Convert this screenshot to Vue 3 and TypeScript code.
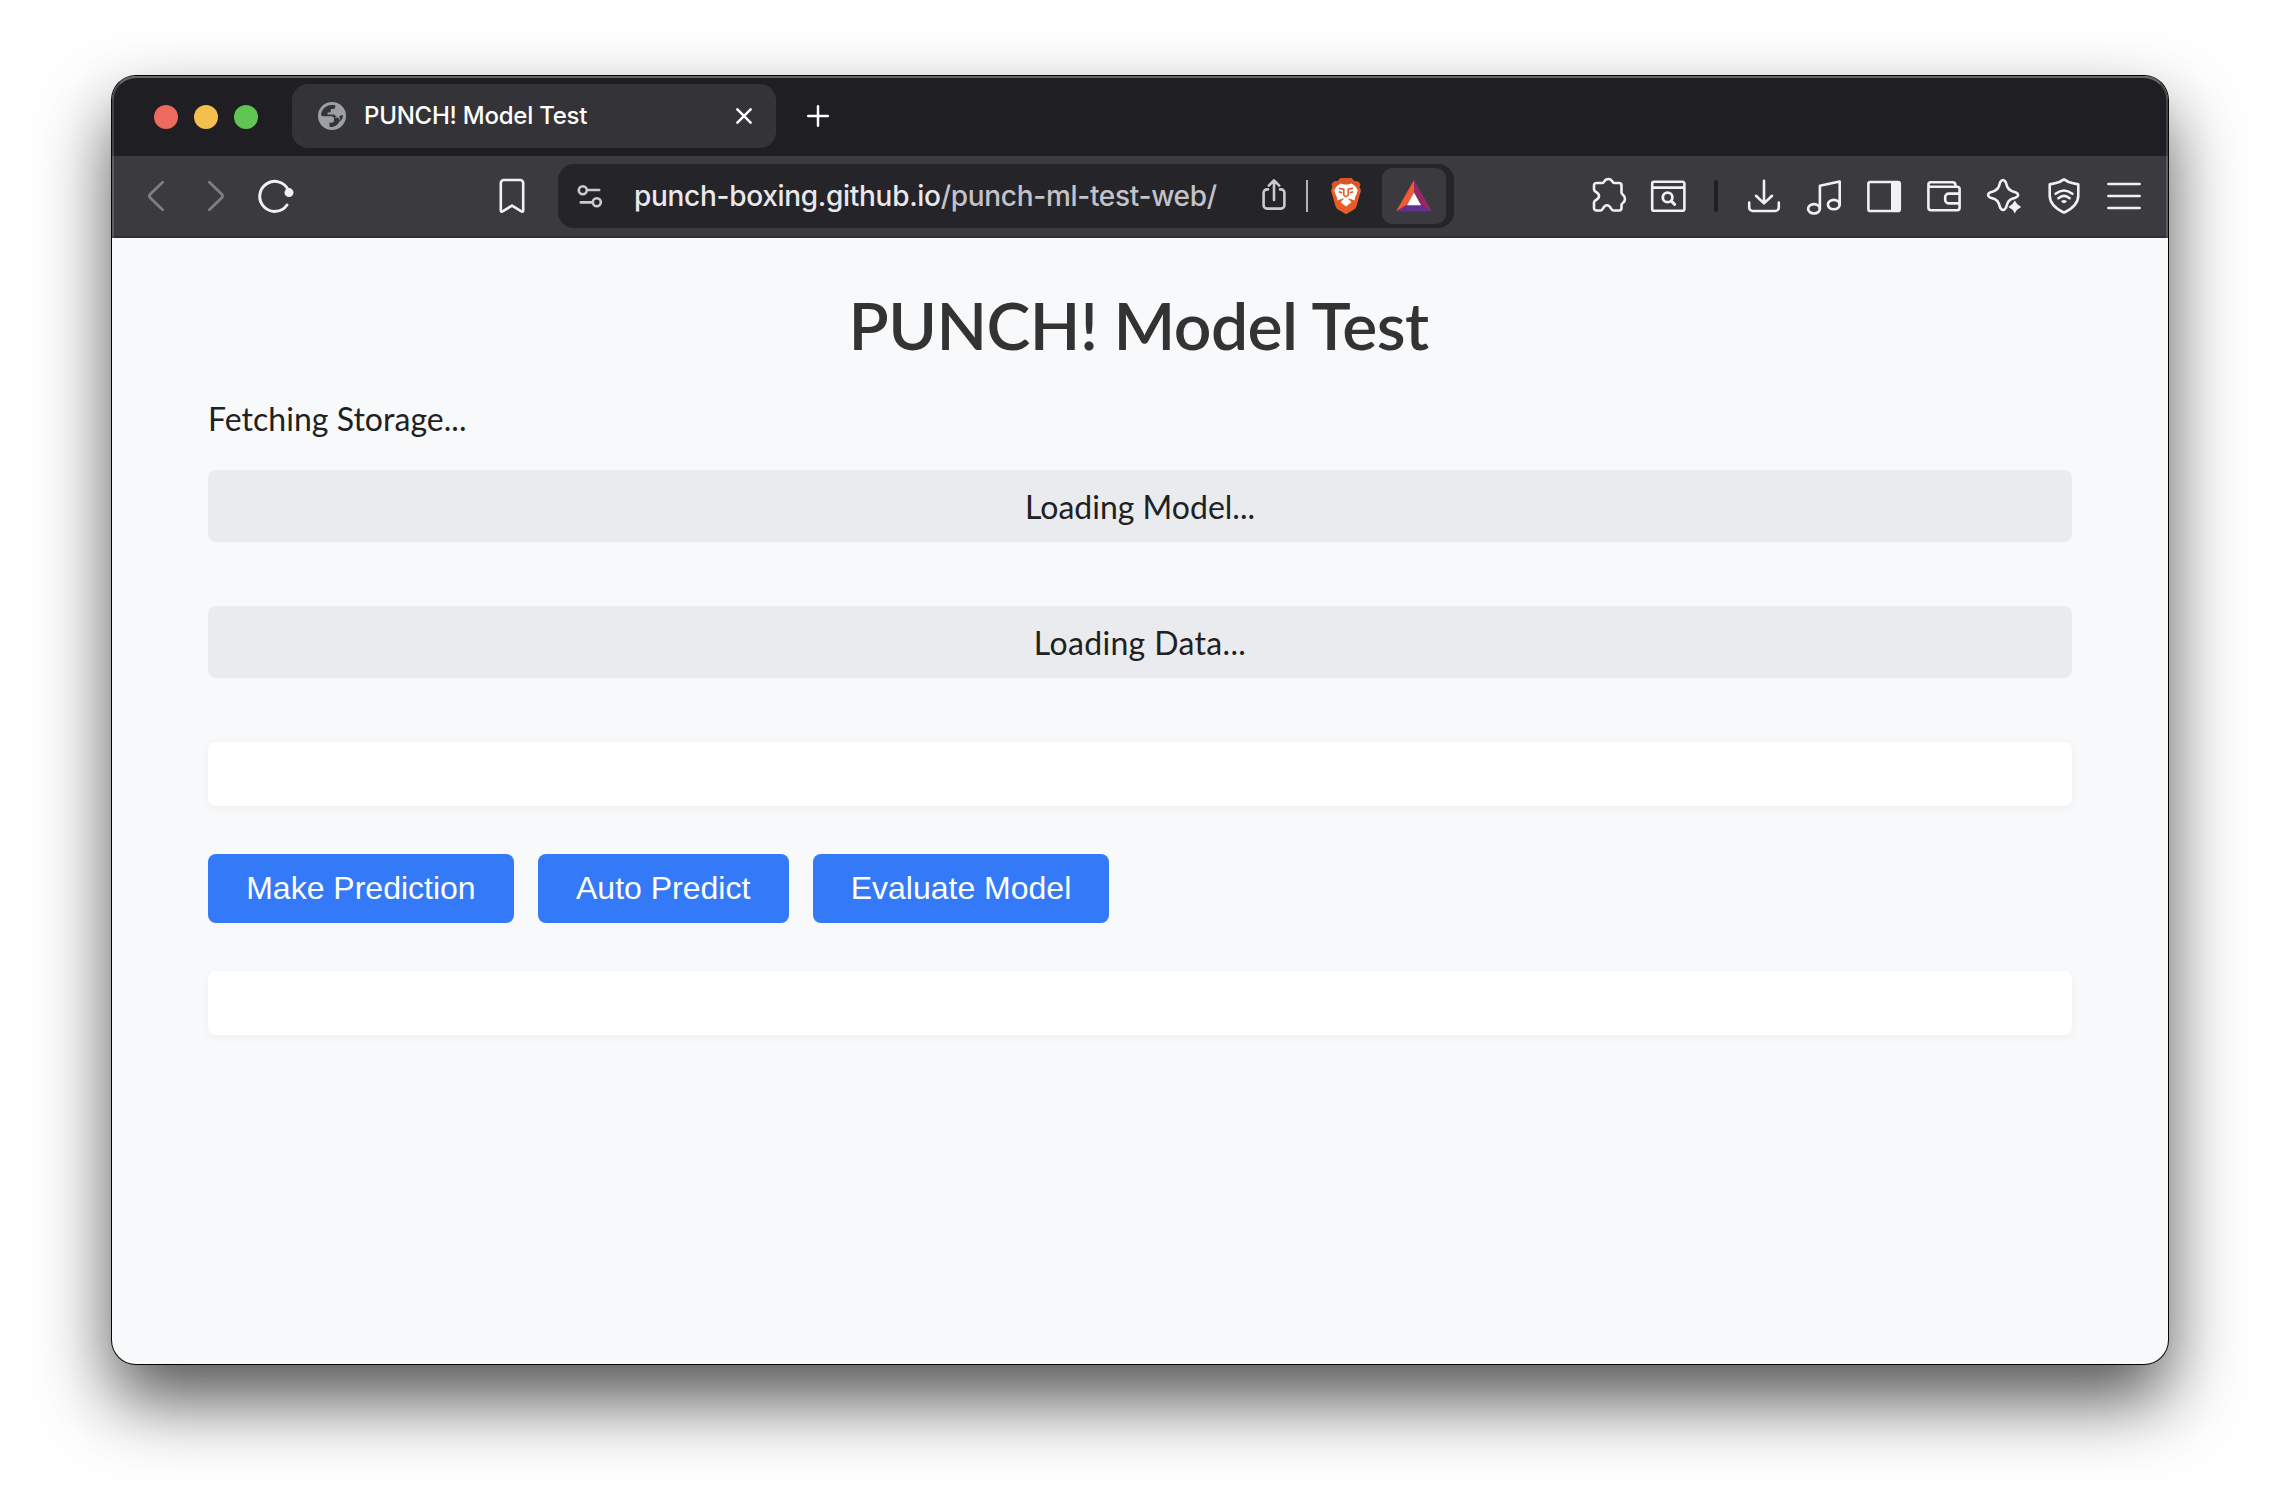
<script setup lang="ts">
interface Action {
  id: string
  label: string
}

const title = 'PUNCH! Model Test'
const status = 'Fetching Storage...'
const actions: Action[] = [
  { id: 'predict', label: 'Make Prediction' },
  { id: 'auto', label: 'Auto Predict' },
  { id: 'evaluate', label: 'Evaluate Model' },
]
</script>

<template>
  <div class="desktop">
    <div class="window">
      <header class="chrome">
        <div class="tabstrip">
          <div class="lights">
            <span class="light red"></span>
            <span class="light yellow"></span>
            <span class="light green"></span>
          </div>
          <div class="tab">
            <svg class="favicon" viewBox="0 0 28 28">
              <circle cx="14" cy="14" r="14" fill="#9aa0a6" />
              <path d="M3 13.2C3.3 8 7.6 3.4 13 3.1H17.2V5.2C17.2 6.4 16.3 7 15.2 7H12.8V9.2C12.8 10.1 12.2 10.6 11.3 10.6H9.6V12.4H15.4C16.6 12.4 17 13 17 14V16H19.6C21 16 21.4 17.2 22 18.4C20.6 21.8 17.6 24.6 14 24.9H11.2V21.4C9.6 21.4 8.6 20.4 8.6 18.8V17.6L3.2 13.4Z" fill="#343338" />
              <path d="M3 14.2H13.4A2.6 2.6 0 0 1 16 16.8V18.4A2.4 2.4 0 0 1 13.6 20.8H11.4V25.4C6 24.6 2.4 19.6 3 14.2Z" fill="#9aa0a6" />
              <path d="M17 13.4V15.2H20.8C22.4 15.2 22.4 17 22 19.4C24 17.8 25 15.6 25 13.2H22.8C21.9 15 19.6 15.4 18.4 14.4Z" fill="#343338" />
            </svg>
            <span class="tab-title">{{ title }}</span>
            <svg class="tab-close" viewBox="0 0 16 16"><path d="M1.4 1.4L14.6 14.6M14.6 1.4L1.4 14.6" /></svg>
          </div>
          <svg class="new-tab" viewBox="0 0 22 22"><path d="M11 1.2V20.8M1.2 11H20.8" /></svg>
        </div>

        <div class="toolbar">
          <div class="nav">
            <svg class="icon dim" viewBox="0 0 40 40"><path d="M26.6 6.2L14.2 18.2Q12.6 20 14.2 21.8L26.6 33.8" /></svg>
            <svg class="icon dim" viewBox="0 0 40 40"><path d="M13.4 6.2L25.8 18.2Q27.4 20 25.8 21.8L13.4 33.8" /></svg>
            <svg class="icon" viewBox="0 0 40 40">
              <path d="M31 29A15 15 0 1 1 32.2 13.8" stroke-width="3" />
              <circle cx="33" cy="16.6" r="4.5" class="solid" />
            </svg>
          </div>
          <svg class="icon bookmark" viewBox="0 0 40 40"><path d="M8.8 7A3 3 0 0 1 11.8 4H28.2A3 3 0 0 1 31.2 7V34.2Q31.2 36.6 29 35.2L20 29.6L11 35.2Q8.8 36.6 8.8 34.2Z" /></svg>

          <div class="omnibox">
            <svg class="icon soft tune" viewBox="0 0 40 40">
              <circle cx="12.8" cy="14.2" r="4" /><path d="M17.5 14H29.2M10.8 26.4H21.6" /><circle cx="26.8" cy="26.2" r="4" />
            </svg>
            <span class="url">punch-boxing.github.io<span class="path">/punch-ml-test-web/</span></span>
            <svg class="icon soft share" viewBox="0 0 40 40">
              <path d="M14 13.4H13A3.4 3.4 0 0 0 9.6 16.8V29.2A3.4 3.4 0 0 0 13 32.6H27A3.4 3.4 0 0 0 30.4 29.2V16.8A3.4 3.4 0 0 0 27 13.4H26M20 24V4.8M14.8 9.6L20 4.4L25.2 9.6" />
            </svg>
            <span class="sep"></span>
            <svg class="brave" viewBox="0 0 32 36">
              <path d="M10.6 0H21.4L24.4 3.2Q27.6 2.4 30.4 6L29.6 9L31 12.4L26.4 28.4Q25.8 30.2 24 31.4L17.2 35.6Q16 36.2 14.8 35.6L8 31.4Q6.2 30.2 5.6 28.4L1 12.4L2.4 9L1.6 6Q4.4 2.4 7.6 3.2Z" fill="#ea5c27" />
              <path d="M10.6 0H21.4L24.4 3.2Q27.6 2.4 30.4 6L29.6 8H2.4L1.6 6Q4.4 2.4 7.6 3.2Z" fill="#dd5425" />
              <path d="M10.4 5.4L13 6.2Q16 7 19 6.2L21.6 5.4L25 8L27.8 12.2L26.4 16.6L25 19.4L24.6 22.4L20 20.8L17.8 20.4L19.8 22.6L21.4 24.2L16 28.4L10.6 24.2L12.2 22.6L14.2 20.4L12 20.8L7.4 22.4L7 19.4L5.6 16.6L4.2 12.2L7 8Z" fill="#fff" />
              <path d="M9 10.4L13.8 11.2L13.8 17.2L16 18.8L18.2 17.2L18.2 11.2L23 10.4M8.8 13.8L12.4 14.8M23.2 13.8L19.6 14.8" fill="none" stroke="#ea5c27" stroke-width="1.6" />
            </svg>
            <div class="rewards">
              <svg viewBox="0 0 36 32">
                <path d="M18 0L0 31.6L11.6 24.6L18 12.6Z" fill="#f15a34" />
                <path d="M18 0L36 31.6L24.4 24.6L18 12.6Z" fill="#932a66" />
                <path d="M0 31.6H36L24.4 24.6H11.6Z" fill="#62308f" />
                <path d="M18 12.6L11 25.2H25Z" fill="#fff" />
              </svg>
            </div>
          </div>

          <div class="tools">
            <svg class="icon" viewBox="0 0 40 40">
              <path d="M7.4 7H13.4C15.8 7 14.8 3 19.3 3S22.8 7 25.2 7H30.1A2.4 2.4 0 0 1 32.5 9.4V16.4C32.5 19 36 18.8 36 23S32.5 26.6 32.5 28.8V32.1A2.4 2.4 0 0 1 30.1 34.5H24.4C21.4 34.5 22.2 29.2 18 29.2S14.6 34.5 11.6 34.5H7.4A2.4 2.4 0 0 1 5 32.1V26.6C5 23.8 10 24 10 20S5 16.4 5 13.6V9.4A2.4 2.4 0 0 1 7.4 7Z" />
            </svg>
            <svg class="icon" viewBox="0 0 40 40">
              <path d="M5 5.8H33.6A1.8 1.8 0 0 1 35.4 7.6V33A1.8 1.8 0 0 1 33.6 34.8H5A1.8 1.8 0 0 1 3.2 33V7.6A1.8 1.8 0 0 1 5 5.8ZM3.2 11.6H35.4" />
              <circle cx="18.6" cy="21.4" r="4.8" stroke-width="2.8" /><path d="M22.2 25L25.6 28.4" stroke-width="3" />
            </svg>
            <span class="divider"></span>
            <svg class="icon" viewBox="0 0 40 40"><path d="M20 4.8V27M12 19.8L20 27.4L28 19.8M5.2 26.6V31.4A3.6 3.6 0 0 0 8.8 35H31.2A3.6 3.6 0 0 0 34.8 31.4V26.6" /></svg>
            <svg class="icon" viewBox="0 0 40 40">
              <ellipse cx="10" cy="32.8" rx="5.9" ry="4.7" /><ellipse cx="29.8" cy="28.6" rx="5.9" ry="4.7" />
              <path d="M15.9 32.8V9.8L35.7 5.6V28.6" />
            </svg>
            <svg class="icon" viewBox="0 0 40 40">
              <rect x="4.4" y="6" width="31.4" height="29" rx="1.8" /><path d="M27 5.6H34.6A1.6 1.6 0 0 1 36.2 7V34A1.6 1.6 0 0 1 34.6 35.4H27Z" class="solid" />
            </svg>
            <svg class="icon" viewBox="0 0 40 40">
              <path d="M4.4 10.6V31.6A2.6 2.6 0 0 0 7 34.2H33.2A2.4 2.4 0 0 0 35.6 31.8V13.2A2.4 2.4 0 0 0 33.2 10.8H6.4A2 2 0 0 1 4.4 8.6A2.4 2.4 0 0 1 6.8 6.2H28.6A2.8 2.8 0 0 1 31.4 9V10.8M35.6 17.6H24.6A3.4 3.4 0 0 0 21.2 21V24A3.4 3.4 0 0 0 24.6 27.4H35.6" />
            </svg>
            <svg class="icon" viewBox="0 0 40 40">
              <path d="M16.2 6.2Q19 1.8 21.8 6.2C23 11 24 14.6 31.4 16.2Q37 19 31.4 21.8C24 23.4 23.4 26.6 22 31.8Q19 36.2 16.2 31.8C14.8 26.6 14 23.4 6.6 21.8Q1.4 19 6.6 16.2C14 14.6 15 11 16.2 6.2Z" />
              <path d="M30.8 24.6Q32.8 29 37.2 31Q32.8 33 30.8 37.4Q28.8 33 24.4 31Q28.8 29 30.8 24.6Z" class="solid" />
            </svg>
            <svg class="icon" viewBox="0 0 40 40">
              <path d="M20 3.4L24.6 6Q28.6 7.4 34.3 8.4V19.4C34.3 27.4 28.4 32.6 20 36.6C11.6 32.6 5.7 27.4 5.7 19.4V8.4Q11.4 7.4 15.4 6Z" />
              <path d="M11.6 17.8Q20 11.2 28.4 17.8M14.4 22.2Q20 17.4 25.6 22.2" stroke-width="2.6" />
              <path d="M17 25.2Q20 22.8 23 25.2L21.4 26.8Q20 27.6 18.6 26.8Z" class="solid" />
            </svg>
            <svg class="icon" viewBox="0 0 40 40"><path d="M4.4 8H35.6M4.4 20H35.6M4.4 32H35.6" /></svg>
          </div>
        </div>
      </header>

      <main class="page">
        <h1>{{ title }}</h1>
        <p class="status">{{ status }}</p>
        <div class="progress">Loading Model...</div>
        <div class="progress data">Loading Data...</div>
        <div class="card"></div>
        <div class="actions">
          <button v-for="action in actions" :key="action.id" type="button">{{ action.label }}</button>
        </div>
        <div class="card"></div>
      </main>
    </div>
  </div>
</template>

<style>
body {
  background: #fff;
}
</style>

<style scoped>
.desktop {
  box-sizing: border-box;
  width: 2280px;
  height: 1512px;
  padding: 76px 112px 148px;
  background: #fff;
  overflow: hidden;
}
.window {
  display: flex;
  flex-direction: column;
  height: 1288px;
  border-radius: 24px;
  background: #f8f9fb;
  box-shadow: 0 0 0 1px #050505, 0 36px 72px rgba(0, 0, 0, 0.68);
}
.chrome {
  position: relative;
  border-radius: 24px 24px 0 0;
  overflow: hidden;
}
/* light rim along the window edge */
.chrome::after {
  content: '';
  position: absolute;
  inset: 0;
  border: 2px solid rgba(255, 255, 255, 0.17);
  border-top-color: rgba(255, 255, 255, 0.32);
  border-bottom: 0;
  border-radius: 24px 24px 0 0;
  pointer-events: none;
}
.tabstrip {
  display: flex;
  align-items: center;
  height: 80px;
  background: #1f1e22;
}
.lights {
  display: flex;
  gap: 16px;
  margin: 2px 34px 0 42px;
}
.light {
  width: 24px;
  height: 24px;
  border-radius: 50%;
}
.red { background: #ed6a5e; }
.yellow { background: #f5bf4f; }
.green { background: #61c554; }
.tab {
  display: flex;
  align-items: center;
  box-sizing: border-box;
  width: 484px;
  height: 64px;
  padding: 0 24px 0 26px;
  border-radius: 16px;
  background: #343338;
}
.favicon {
  width: 28px;
  height: 28px;
}
.tab-title {
  flex: 1;
  margin-left: 18px;
  font: 450 24px/30px Inter, sans-serif;
  letter-spacing: -0.24px;
  color: #fff;
}
.tab-close {
  width: 16px;
  height: 16px;
}
.new-tab {
  width: 22px;
  height: 22px;
  margin-left: 31px;
}
.tab-close path,
.new-tab path {
  fill: none;
  stroke: #fff;
  stroke-width: 2.5;
  stroke-linecap: round;
}
.toolbar {
  display: flex;
  align-items: center;
  box-sizing: border-box;
  height: 82px;
  border-bottom: 2px solid #303034;
  background: #3b3a3f;
}
.icon {
  flex: none;
  width: 40px;
  height: 40px;
  fill: none;
  stroke: #f0f1f5;
  stroke-width: 2.6;
  stroke-linecap: round;
  stroke-linejoin: round;
}
.icon .solid {
  fill: #f0f1f5;
  stroke: none;
}
.icon.dim {
  stroke: #7f7e84;
  stroke-width: 2.8;
}
.icon.soft {
  stroke: #cbcacf;
}
.nav {
  display: flex;
  gap: 20px;
  margin-left: 24px;
}
.bookmark {
  margin-left: 196px;
}
.omnibox {
  display: flex;
  align-items: center;
  box-sizing: border-box;
  width: 896px;
  height: 64px;
  margin-left: 26px;
  padding-right: 8px;
  border-radius: 16px;
  background: #252429;
}
.tune {
  margin-left: 12px;
}
.url {
  flex: 1;
  margin-left: 24px;
  font: 450 28px/36px Inter, sans-serif;
  letter-spacing: -0.3px;
  white-space: nowrap;
  color: #e9e8ec;
}
.path {
  color: #c3c2c8;
}
.sep {
  width: 2px;
  height: 32px;
  margin: 0 22px 0 12px;
  background: #b3b2b7;
}
.brave {
  width: 32px;
  height: 36px;
}
.rewards {
  display: flex;
  align-items: center;
  justify-content: center;
  width: 64px;
  height: 56px;
  margin-left: 20px;
  border-radius: 10px;
  background: #3b3a3f;
}
.rewards svg {
  width: 36px;
  height: 32px;
}
.tools {
  display: flex;
  align-items: center;
  gap: 20px;
  margin: 0 24px 0 auto;
}
.divider {
  width: 4px;
  height: 32px;
  margin: 0 6px 0 5px;
  border-radius: 2px;
  background: #1f1e22;
}
.page {
  flex: 1;
  padding: 47px 96px 0;
  font: 400 32px/48px Lato, sans-serif;
  color: #212121;
}
h1 {
  margin: 0 3px 30px 0;
  font-weight: 600;
  font-size: 66px;
  line-height: 80px;
  letter-spacing: -0.55px;
  text-align: center;
  color: #333;
}
.status {
  margin: 0 0 27px;
  letter-spacing: 0.04px;
}
.progress {
  box-sizing: border-box;
  height: 72px;
  margin-bottom: 64px;
  padding-top: 1px;
  border-radius: 8px;
  background: #eaebee;
  line-height: 72px;
  text-align: center;
}
.data {
  letter-spacing: 0.34px;
}
.card {
  height: 64px;
  border-radius: 8px;
  background: #fff;
  box-shadow: 0 2px 8px rgba(0, 0, 0, 0.05);
}
.actions {
  display: flex;
  gap: 24px;
  margin: 48px 0;
}
button {
  height: 69px;
  padding: 0 38.2px;
  border: 0;
  border-radius: 8px;
  background: #3479f8;
  font: 400 32px/69px "Liberation Sans", Arial, sans-serif;
  color: #fff;
}
</style>
